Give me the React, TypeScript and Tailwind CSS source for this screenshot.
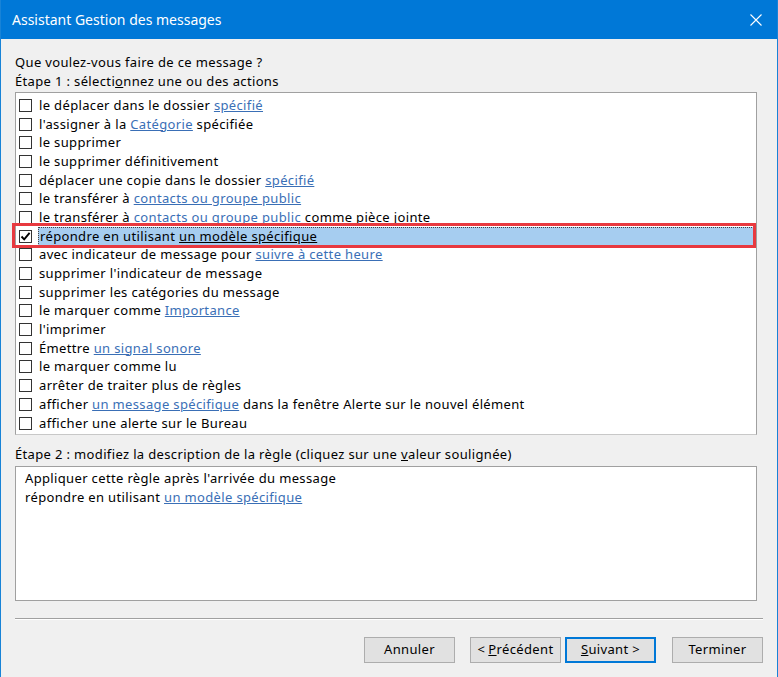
import React from "react";

type Seg = { t: string; link?: boolean };

const ACTIONS: Seg[][] = [
  [{ t: "le déplacer dans le dossier " }, { t: "spécifié", link: true }],
  [{ t: "l'assigner à la " }, { t: "Catégorie", link: true }, { t: " spécifiée" }],
  [{ t: "le supprimer" }],
  [{ t: "le supprimer définitivement" }],
  [{ t: "déplacer une copie dans le dossier " }, { t: "spécifié", link: true }],
  [{ t: "le transférer à " }, { t: "contacts ou groupe public", link: true }],
  [
    { t: "le transférer à " },
    { t: "contacts ou groupe public", link: true },
    { t: " comme pièce jointe" },
  ],
  [{ t: "répondre en utilisant " }, { t: "un modèle spécifique", link: true }],
  [{ t: "avec indicateur de message pour " }, { t: "suivre à cette heure", link: true }],
  [{ t: "supprimer l'indicateur de message" }],
  [{ t: "supprimer les catégories du message" }],
  [{ t: "le marquer comme " }, { t: "Importance", link: true }],
  [{ t: "l'imprimer" }],
  [{ t: "Émettre " }, { t: "un signal sonore", link: true }],
  [{ t: "le marquer comme lu" }],
  [{ t: "arrêter de traiter plus de règles" }],
  [
    { t: "afficher " },
    { t: "un message spécifique", link: true },
    { t: " dans la fenêtre Alerte sur le nouvel élément" },
  ],
  [{ t: "afficher une alerte sur le Bureau" }],
];

const SELECTED = 7;

function Checkbox({ checked }: { checked: boolean }) {
  return (
    <span className="flex h-[13px] w-[13px] shrink-0 items-center justify-center border border-[#333] bg-white">
      {checked && (
        <svg width="11" height="11" viewBox="0 0 11 11">
          <path d="M1.5 5.5 L4.2 8.3 L9.6 1.8" fill="none" stroke="#000" strokeWidth="1.9" />
        </svg>
      )}
    </span>
  );
}

function Row({ segs, selected }: { segs: Seg[]; selected: boolean }) {
  return (
    <div className="flex h-[18.7px] items-center pl-[3px]">
      <Checkbox checked={selected} />
      <div
        className={`ml-[6px] flex h-full flex-1 items-center whitespace-pre pl-[1px] ${
          selected ? "border border-dotted border-[#444] bg-[#a6cdf0]" : ""
        }`}
      >
        {segs.map((s, i) =>
          s.link ? (
            <span
              key={i}
              className={selected ? "text-black underline" : "text-[#3a6fb6] underline"}
            >
              {s.t}
            </span>
          ) : (
            <span key={i}>{s.t}</span>
          )
        )}
      </div>
    </div>
  );
}

function Btn({ children, focused }: { children: React.ReactNode; focused?: boolean }) {
  return (
    <button
      className={`flex h-[26px] w-[91px] items-center justify-center bg-[#e1e1e1] text-black ${
        focused ? "border-2 border-[#0078d7]" : "border border-[#adadad]"
      }`}
    >
      {children}
    </button>
  );
}

export default function App() {
  return (
    <div
      className="relative flex h-[677px] w-[778px] flex-col overflow-hidden border-x border-[#1883d7] bg-[#f0f0f0] text-[13px] leading-[19px] tracking-[0.35px] text-black"
      style={{ fontFamily: '"Noto Sans", "Open Sans", sans-serif' }}
    >
      <div className="flex h-[39px] shrink-0 items-center justify-between bg-[#0078d7] pl-[11px] pr-[15px] text-white">
        <span className="text-[14px] tracking-normal">Assistant Gestion des messages</span>
        <svg width="12" height="12" viewBox="0 0 12 12">
          <path d="M0.5 0.5 L11.5 11.5 M11.5 0.5 L0.5 11.5" stroke="#fff" strokeWidth="1.1" />
        </svg>
      </div>

      <div className="flex flex-1 flex-col px-[14px] pt-[14px]">
        <div>Que voulez-vous faire de ce message ?</div>
        <div>
          Étape 1 : sélecti<span className="underline">o</span>nnez une ou des actions
        </div>

        <div className="mr-[6px] mt-px border border-[#a0a0a0] border-b-[#c8c8c8] bg-white pb-[2px] pt-[3px]">
          {ACTIONS.map((segs, i) => (
            <Row key={i} segs={segs} selected={i === SELECTED} />
          ))}
        </div>

        <div className="mt-[10px]">
          Étape 2 : modifiez la description de la règle (cliquez sur une{" "}
          <span className="underline">v</span>aleur soulignée)
        </div>
        <div className="mr-[6px] mt-[1.5px] h-[135px] border border-[#a0a0a0] bg-white pl-[9px] pt-[2px]">
          <div>Appliquer cette règle après l'arrivée du message</div>
          <div>
            répondre en utilisant{" "}
            <span className="text-[#3a6fb6] underline">un modèle spécifique</span>
          </div>
        </div>

        <div className="mt-[17px] h-[2px] border-t border-[#a0a0a0] bg-white" />

        <div className="mt-[17px] flex justify-end">
          <Btn>Annuler</Btn>
          <div className="ml-[15px]">
            <Btn>
              &lt; <span className="ml-[3px] underline">P</span>récédent
            </Btn>
          </div>
          <div className="ml-[4px]">
            <Btn focused>
              <span className="underline">S</span>uivant &gt;
            </Btn>
          </div>
          <div className="ml-[16px]">
            <Btn>Terminer</Btn>
          </div>
        </div>
      </div>

      {/* annotation box around the selected action */}
      <div className="pointer-events-none absolute left-[11px] top-[223px] h-[25px] w-[744px] border-[3px] border-[#e8393f]" />
    </div>
  );
}
